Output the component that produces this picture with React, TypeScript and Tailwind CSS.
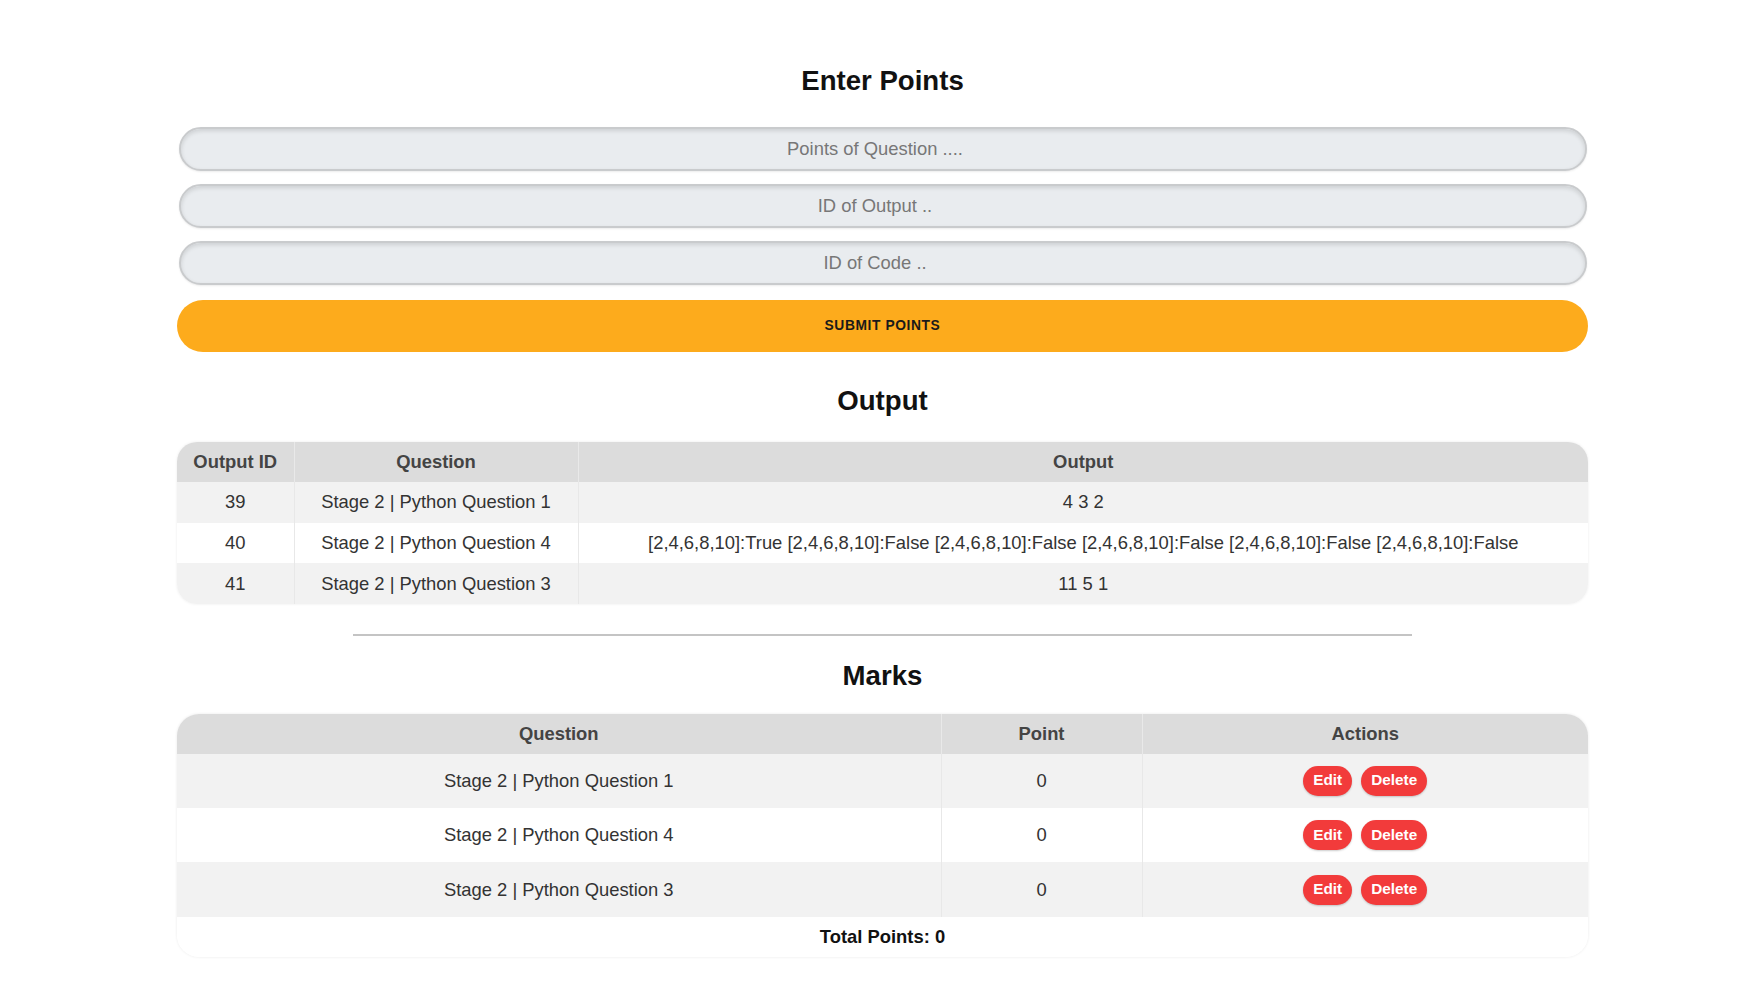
import { useState } from "react";

type OutputRow = { id: number; question: string; output: string };
type MarkRow = { question: string; point: number };

const OUTPUTS: OutputRow[] = [
  { id: 39, question: "Stage 2 | Python Question 1", output: "4 3 2" },
  {
    id: 40,
    question: "Stage 2 | Python Question 4",
    output:
      "[2,4,6,8,10]:True [2,4,6,8,10]:False [2,4,6,8,10]:False [2,4,6,8,10]:False [2,4,6,8,10]:False [2,4,6,8,10]:False",
  },
  { id: 41, question: "Stage 2 | Python Question 3", output: "11 5 1" },
];

const MARKS: MarkRow[] = [
  { question: "Stage 2 | Python Question 1", point: 0 },
  { question: "Stage 2 | Python Question 4", point: 0 },
  { question: "Stage 2 | Python Question 3", point: 0 },
];

const FIELDS = ["Points of Question ....", "ID of Output ..", "ID of Code .."];

const Title = ({ children }: { children: string }) => (
  <h2 className="text-center text-[27.6px] leading-[32px] font-bold text-[#111]">{children}</h2>
);

const App = () => {
  const [values, setValues] = useState<string[]>(["", "", ""]);
  const total = MARKS.reduce((s, m) => s + m.point, 0);

  return (
    <div className="min-h-screen bg-white font-['Liberation_Sans',Arial,sans-serif] text-[#333] pl-[177px] pr-[167px] pt-[65px] pb-[44px]">
      {/* ── Enter points form ── */}
      <Title>Enter Points</Title>
      <div className="mt-[30px] flex flex-col gap-[13px]">
        {FIELDS.map((ph, i) => (
          <input
            key={ph}
            value={values[i]}
            onChange={e => setValues(v => v.map((x, j) => (j === i ? e.target.value : x)))}
            placeholder={ph}
            className="ml-[2px] mr-px h-[44px] rounded-full border-2 border-[#c9cbcd] bg-[#e9ecef] pr-[16px] text-center text-[18.4px] text-[#333] placeholder:text-[#777] outline-none shadow-[inset_0_2px_4px_rgba(0,0,0,0.12),0_1px_2px_rgba(0,0,0,0.08)]"
          />
        ))}
      </div>
      <button className="mt-[15px] w-full h-[52px] rounded-full bg-[#fdab1c] text-[13.8px] font-bold tracking-[0.6px] text-[#1a1a1a]">
        SUBMIT POINTS
      </button>

      {/* ── Output table ── */}
      <div className="mt-[33px]">
        <Title>Output</Title>
      </div>
      <div className="mt-[25px] rounded-[20px] overflow-hidden shadow-[0_0_3px_rgba(0,0,0,0.08)]">
        <table className="w-full table-fixed border-collapse text-[18.4px] text-center">
          <thead>
            <tr className="h-[40px] bg-[#dcdcdc] text-[#444]">
              <th className="w-[117px] font-bold border-r border-[#e9e9e9]">Output ID</th>
              <th className="w-[284px] font-bold border-r border-[#e9e9e9]">Question</th>
              <th className="font-bold">Output</th>
            </tr>
          </thead>
          <tbody>
            {OUTPUTS.map((r, i) => (
              <tr key={r.id} className={`h-[40.6px] ${i % 2 === 0 ? "bg-[#f2f2f2]" : "bg-white"}`}>
                <td className="border-r border-[#e8e8e8]">{r.id}</td>
                <td className="border-r border-[#e8e8e8]">{r.question}</td>
                <td className="whitespace-nowrap">{r.output}</td>
              </tr>
            ))}
          </tbody>
        </table>
      </div>

      {/* Divider */}
      <div className="mt-[30px] mx-auto w-3/4 h-[2px] bg-[#c4c4c4]" />

      {/* ── Marks table ── */}
      <div className="mt-[24px]">
        <Title>Marks</Title>
      </div>
      <div className="mt-[22px] rounded-[22px] overflow-hidden shadow-[0_0_3px_rgba(0,0,0,0.09)]">
        <table className="w-full table-fixed border-collapse text-[18.4px] text-center">
          <thead>
            <tr className="h-[40px] bg-[#dcdcdc] text-[#444]">
              <th className="w-[764px] font-bold border-r border-[#e9e9e9]">Question</th>
              <th className="w-[201px] font-bold border-r border-[#e9e9e9]">Point</th>
              <th className="font-bold">Actions</th>
            </tr>
          </thead>
          <tbody>
            {MARKS.map((m, i) => (
              <tr key={m.question} className={`h-[54.3px] ${i % 2 === 0 ? "bg-[#f2f2f2]" : "bg-white"}`}>
                <td className="border-r border-[#e8e8e8]">{m.question}</td>
                <td className="border-r border-[#e8e8e8]">{m.point}</td>
                <td>
                  <div className="flex justify-center gap-[9px]">
                    <button className="h-[30px] px-[10px] rounded-full bg-[#f23b3b] text-white text-[15.3px] font-bold shadow-[0_1px_2px_rgba(0,0,0,0.2)]">
                      Edit
                    </button>
                    <button className="h-[30px] px-[10px] rounded-full bg-[#f23b3b] text-white text-[15.3px] font-bold shadow-[0_1px_2px_rgba(0,0,0,0.2)]">
                      Delete
                    </button>
                  </div>
                </td>
              </tr>
            ))}
          </tbody>
          <tfoot>
            <tr className="h-[40px] bg-white">
              <td colSpan={3} className="font-bold text-[#111]">
                Total Points: {total}
              </td>
            </tr>
          </tfoot>
        </table>
      </div>
    </div>
  );
};

export default App;
